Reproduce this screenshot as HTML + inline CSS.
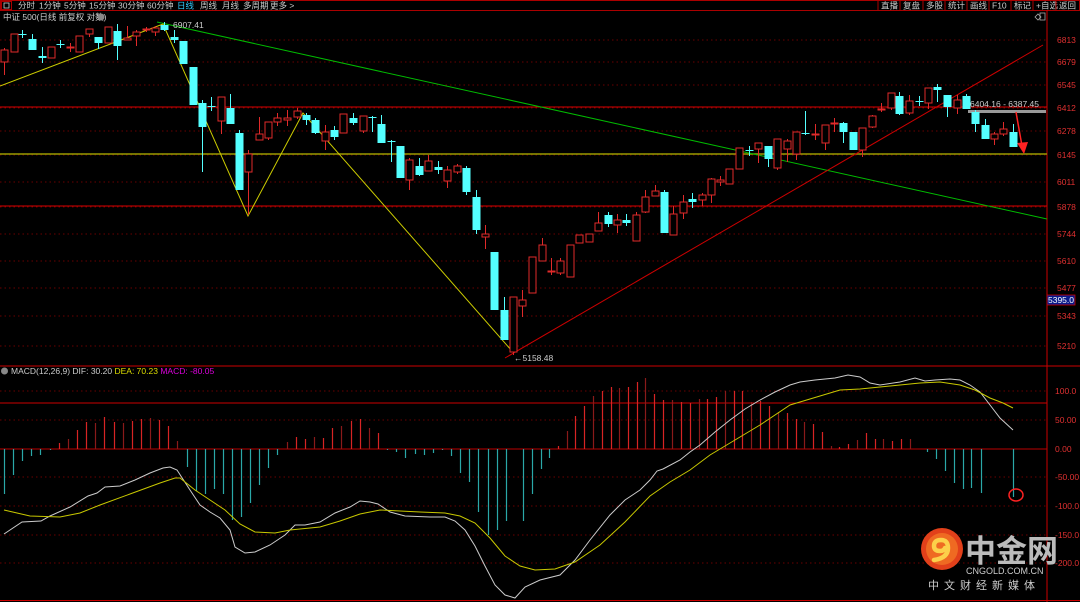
<!DOCTYPE html>
<html><head><meta charset="utf-8"><style>
html,body{margin:0;padding:0;background:#000;width:1080px;height:602px;overflow:hidden}
svg{display:block}
text{font-family:"Liberation Sans","Noto Sans CJK SC",sans-serif}
</style></head><body>
<svg id="s" width="1080" height="602" xmlns="http://www.w3.org/2000/svg">
<rect width="1080" height="602" fill="#000"/>
<!-- toolbar -->
<rect x="0.5" y="0.5" width="1079" height="10" fill="none" stroke="#a00"/>
<rect x="1.5" y="1.5" width="10" height="8" fill="none" stroke="#a00"/>
<rect x="4" y="3" width="5" height="5" fill="none" stroke="#ccc" stroke-width="0.8"/>
<g font-size="8.5" fill="#ccc">
<text x="18" y="8.5">分时</text><text x="39" y="8.5">1分钟</text><text x="64" y="8.5">5分钟</text><text x="89" y="8.5">15分钟</text><text x="118" y="8.5">30分钟</text><text x="147" y="8.5">60分钟</text>
<text x="177" y="8.5" fill="#3cf">日线</text><text x="200" y="8.5">周线</text><text x="222" y="8.5">月线</text><text x="243" y="8.5">多周期</text><text x="270" y="8.5">更多 &gt;</text>
<text x="881" y="8.5">直播</text><text x="903" y="8.5">复盘</text><text x="926" y="8.5">多股</text><text x="948" y="8.5">统计</text><text x="970" y="8.5">画线</text><text x="992" y="8.5">F10</text><text x="1014" y="8.5">标记</text><text x="1036" y="8.5">+自选</text><text x="1059" y="8.5">返回</text>
</g>
<g stroke="#a00"><line x1="878" y1="0" x2="878" y2="10"/><line x1="900" y1="0" x2="900" y2="10"/><line x1="923" y1="0" x2="923" y2="10"/><line x1="945" y1="0" x2="945" y2="10"/><line x1="967" y1="0" x2="967" y2="10"/><line x1="989" y1="0" x2="989" y2="10"/><line x1="1011" y1="0" x2="1011" y2="10"/><line x1="1033" y1="0" x2="1033" y2="10"/><line x1="1056" y1="0" x2="1056" y2="10"/></g>
<text x="3" y="20" font-size="8.5" fill="#ccc">中证 500(日线 前复权 对数)</text>
<circle cx="101" cy="17" r="3.5" fill="#888"/>
<!-- right axis -->
<line x1="1047" y1="10" x2="1047" y2="602" stroke="#c00"/>
<line x1="0" y1="366" x2="1080" y2="366" stroke="#c00"/>
<line x1="0" y1="600.5" x2="1080" y2="600.5" stroke="#c00"/>
<path d="M1035 17 l3 -3 3 3 -3 3z" fill="none" stroke="#aaa" stroke-width="0.8"/>
<rect x="1040" y="13" width="5" height="7" fill="none" stroke="#aaa" stroke-width="0.8"/>
<g id="grid"></g>
<g id="lines"></g>
<g id="candles"></g>
<g id="macd"></g>
<!-- logo -->
<circle cx="942" cy="549" r="21" fill="#e2401a"/>
<circle cx="942" cy="549" r="16" fill="#ef6a22"/>
<path d="M934 560 q14 -2 14 -12 q0 -8 -7 -8 q-7 0 -7 6 q0 5 6 5 q4 0 5 -3" fill="none" stroke="#fcd04a" stroke-width="4.5" stroke-linecap="round"/>
<text x="965" y="562" font-size="31" font-weight="bold" fill="#bbb" font-family="Noto Sans CJK SC,sans-serif">中金网</text>
<text x="966" y="574" font-size="9" fill="#ccc">CNGOLD.COM.CN</text>
<text x="928" y="589" font-size="11" fill="#ccc" letter-spacing="5">中文财经新媒体</text>
</svg>
<script>
var NS="http://www.w3.org/2000/svg";
function el(p,t,a,txt){var e=document.createElementNS(NS,t);for(var k in a)e.setAttribute(k,a[k]);if(txt!=null)e.textContent=txt;document.getElementById(p).appendChild(e);return e;}
// grid main
var ticks=[[6813,40],[6679,62],[6545,85],[6412,108],[6278,131],[6145,155],[6011,182],[5878,207],[5744,234],[5610,261],[5477,288],[5343,316],[5210,346]];
ticks.forEach(function(t){el("grid","line",{x1:0,y1:t[1],x2:1047,y2:t[1],stroke:"#6a0000","stroke-dasharray":"1.5,3"});el("grid","text",{x:1057,y:t[1]+3,"font-size":"8.5",fill:"#e03030"},t[0]);});
el("grid","rect",{x:1047,y:295,width:28,height:10,fill:"#0a1a8a",stroke:"#c00","stroke-width":"0.8"});
el("grid","text",{x:1048,y:303,"font-size":"8.5",fill:"#fff"},"5395.0");
// macd grid
var mt=[["100.0",391],["50.00",420],["0.00",449],["-50.00",477],["-100.0",506],["-150.0",535],["-200.0",563]];
el("grid","line",{x1:0,y1:391,x2:1047,y2:391,stroke:"#6a0000","stroke-dasharray":"1.5,3"});
mt.forEach(function(t){if(t[1]!=449)el("grid","line",{x1:0,y1:t[1],x2:1047,y2:t[1],stroke:"#6a0000","stroke-dasharray":"1.5,3"});el("grid","text",{x:1055,y:t[1]+3,"font-size":"8.5",fill:"#e03030"},t[0]);});
el("grid","line",{x1:0,y1:449,x2:1047,y2:449,stroke:"#b00"});
el("grid","line",{x1:0,y1:403,x2:1047,y2:403,stroke:"#c00"});
el("grid","circle",{cx:4.5,cy:371,r:3.5,fill:"#888"});
var t=el("grid","text",{x:11,y:374,"font-size":"8.5",fill:"#ccc"});t.innerHTML='MACD(12,26,9) DIF: 30.20 <tspan fill="#dd0">DEA: 70.23</tspan> <tspan fill="#d0d">MACD: -80.05</tspan>';
// horizontal & trend lines
el("lines","line",{x1:0,y1:107,x2:1047,y2:107,stroke:"#d00","stroke-width":"1"});
el("lines","line",{x1:0,y1:206,x2:1047,y2:206,stroke:"#d00","stroke-width":"1"});
el("lines","line",{x1:0,y1:154,x2:1047,y2:154,stroke:"#9a9a00","stroke-width":"1.5"});
el("lines","line",{x1:157,y1:22,x2:1047,y2:219,stroke:"#0b0","stroke-width":"1"});
el("lines","line",{x1:505,y1:358,x2:1043,y2:45,stroke:"#c00","stroke-width":"1"});
el("lines","polyline",{points:"0,86 163,24 248,216 303,113 512,351",fill:"none",stroke:"#cc0","stroke-width":"1"});
el("lines","rect",{x:968,y:110,width:78,height:3,fill:"#999"});
el("lines","text",{x:970,y:107,"font-size":"8.5",fill:"#ccc"},"6404.16 - 6387.45");
el("lines","text",{x:173,y:28,"font-size":"8.5",fill:"#ccc"},"6907.41");
el("lines","text",{x:514,y:361,"font-size":"8.5",fill:"#ccc"},"←5158.48");
el("lines","path",{d:"M1016 112 L1022 146",stroke:"#f22","stroke-width":"1.5",fill:"none"});
el("lines","path",{d:"M1017 143 L1028 142 L1024 154z",fill:"#f22"});
// candles: x,color(r/c),top,bottom,wickTop,wickBot
var C=[[4,'r',50,62,48,75],[14,'r',34,52],[22,'c',34,35,30,38],[32,'c',39,50,34,50],[42,'c',56,58,47,63],[51,'r',47,58],[60,'c',44,45,40,48],[70,'r',47,48,43,52],[79,'r',36,52],[89,'r',29,34,29,37],[98,'c',37,43,37,49],[108,'r',27,43],[117,'c',31,46,24,60],[127,'r',38,40,26,40],[136,'r',32,36,30,46],[146,'r',29,30,27,32],[155,'r',28,32,26,36],[164,'c',25,30,22,31],[174,'c',37,40,30,43],[183,'c',41,64],[193,'c',67,105],[202,'c',103,127,100,172],[211,'c',106,107,97,111],[221,'r',97,121,97,134],[230,'c',108,124,94,124],[239,'c',133,190,130,190],[248,'r',154,172,150,215],[259,'r',134,140,117,140],[268,'r',122,138,122,140],[277,'r',118,122,113,126],[287,'r',118,120,110,126],[297,'r',111,117,108,119],[306,'c',115,120,113,125],[315,'c',120,133,118,134],[325,'r',132,141,125,150],[334,'c',130,137,126,140],[343,'r',114,133],[353,'c',118,123,113,125],[363,'r',116,131,116,133],[372,'c',117,118,116,132],[381,'c',124,143,115,143],[391,'c',141,142,140,162],[400,'c',146,178],[409,'r',160,180,158,190],[419,'c',166,175,158,176],[428,'r',161,171,155,171],[438,'c',167,170,161,174],[447,'r',170,181,166,188],[457,'r',166,172,164,174],[466,'c',168,192,166,195],[476,'c',197,230,190,234],[485,'r',234,237,225,249],[494,'c',252,310],[504,'c',310,340,297,340],[513,'r',297,352,297,355],[522,'r',300,306,290,317],[532,'r',257,293],[542,'r',245,261,238,261],[551,'r',271,272,258,275],[560,'r',261,273,258,275],[570,'r',245,277],[579,'r',235,243],[589,'r',234,242],[598,'r',223,231,212,231],[608,'c',215,224,212,227],[617,'r',220,225,214,233],[626,'c',220,223,214,226],[636,'r',215,241,212,241],[645,'r',197,212,190,213],[655,'r',191,196,185,196],[664,'c',192,233,190,233],[673,'r',214,235,206,235],[683,'r',202,213,195,219],[692,'c',199,202,193,208],[702,'r',195,200,193,206],[711,'r',179,195,178,203],[720,'r',180,182,176,186],[729,'r',169,184],[739,'r',148,169],[749,'c',150,151,146,156],[758,'r',143,149,143,163],[768,'c',146,159,146,167],[777,'r',139,168,139,170],[787,'r',141,149,139,162],[796,'r',132,154,132,160],[805,'c',133,134,111,135],[815,'r',134,135,124,140],[825,'r',125,143,125,150],[834,'r',123,124,118,132],[843,'c',123,132,122,143],[853,'c',132,150],[862,'r',128,150,128,157],[872,'r',116,127,115,128],[881,'r',109,110,103,112],[891,'r',93,108,93,110],[899,'c',96,114,92,115],[909,'r',101,113,95,115],[919,'c',101,102,96,106],[928,'r',88,103,88,109],[937,'c',87,90,84,102],[947,'c',95,107,95,117],[957,'r',100,108,95,114],[966,'c',96,109,94,109],[975,'c',112,124,110,132],[985,'c',125,139,119,139],[994,'r',134,139,132,145],[1003,'r',129,134,122,136],[1013,'c',132,147,124,147]];
C.forEach(function(c){var x=c[0],col=c[1]=='r'?'#e02a2a':'#54ffff';var top=c[2],bot=c[3];var wt=c[4]!=null?c[4]:top,wb=c[5]!=null?c[5]:bot;
 el("candles","line",{x1:x+0.5,y1:wt,x2:x+0.5,y2:wb,stroke:col,"stroke-width":"1"});
 var h=Math.max(bot-top,1);
 if(c[1]=='r')el("candles","rect",{x:x-3,y:top,width:7,height:h,fill:"#000",stroke:col,"stroke-width":"1"});
 else el("candles","rect",{x:x-3.5,y:top,width:8,height:h,fill:col});
});
// macd bars
var B=[[4,494],[13,475],[22,461],[31,456],[40,455],[50,450],[59,443],[68,439],[77,430],[86,422],[95,423],[104,417],[114,422],[123,423],[132,421],[141,419],[150,418],[159,420],[168,426],[177,441],[187,467],[196,491],[205,494],[214,489],[223,494],[232,520],[241,517],[250,503],[259,485],[268,468],[277,455],[287,442],[296,437],[305,439],[314,437],[323,438],[332,428],[341,426],[351,421],[360,419],[369,428],[378,433],[387,450],[396,452],[405,458],[415,454],[424,455],[433,453],[442,450],[451,456],[460,473],[469,482],[478,512],[488,535],[497,530],[506,521],[523,521],[532,494],[541,469],[549,458],[558,446],[567,431],[575,416],[584,406],[593,396],[602,391],[611,387],[619,388],[628,387],[637,382],[645,378],[654,394],[663,400],[672,400],[681,402],[690,403],[699,399],[707,399],[716,397],[725,391],[734,391],[742,391],[751,402],[760,401],[769,406],[778,412],[787,413],[796,419],[804,422],[813,424],[822,432],[831,446],[839,447],[848,444],[857,440],[866,433],[875,439],[883,439],[892,441],[901,439],[910,439],[927,452],[936,459],[945,471],[954,483],[963,489],[971,488],[981,493]];
B.forEach(function(b,i){var up=b[1]<449;var col=up?(i%3==1?'#8a1a1a':'#d82424'):'#2aa8a8';el("macd","line",{x1:b[0]+0.5,y1:449,x2:b[0]+0.5,y2:b[1],stroke:col,"stroke-width":"1.2"});});
el("macd","line",{x1:1013.5,y1:449,x2:1013.5,y2:497,stroke:"#2aa8a8","stroke-width":"1.2"});
el("macd","polyline",{fill:"none",stroke:"#ccc","stroke-width":"1",points:"4,534 22,522 41,521 50,516 70,507 88,496 97,493 105,487 120,486 135,480 150,473 163,468 170,467 177,470 190,490 200,505 210,512 220,518 230,530 235,547 245,553 255,552 270,545 285,535 295,525 305,525 320,522 335,513 350,507 360,501 370,502 378,504 390,512 405,516 430,517 445,517 455,521 465,530 475,546 485,566 495,585 505,595 515,598 525,587 540,580 560,575 575,560 590,540 610,515 625,500 640,490 650,480 657,471 663,469 680,460 690,452 700,445 715,432 730,420 745,409 760,400 775,392 790,385 800,382 815,380 835,378 848,375 860,377 870,383 880,385 900,382 915,378 925,381 935,380 950,379 960,380 970,385 980,392 990,405 1000,418 1013,430"});
el("macd","polyline",{fill:"none",stroke:"#c8c800","stroke-width":"1",points:"4,510 30,516 60,517 80,513 100,505 130,494 160,483 175,478 180,478 195,490 210,500 225,510 240,524 255,532 275,533 290,530 320,527 340,521 360,514 380,510 400,511 420,512 445,513 460,516 475,523 490,538 505,556 520,566 535,570 555,569 575,562 600,545 625,522 650,496 670,482 690,470 710,455 735,440 760,425 790,405 820,396 840,390 860,389 880,387 900,385 920,383 940,382 960,385 975,390 990,398 1003,403 1013,408"});
el("macd","ellipse",{cx:1016,cy:495,rx:7,ry:6,fill:"none",stroke:"#f22","stroke-width":"1.5"});
</script>
</body></html>
